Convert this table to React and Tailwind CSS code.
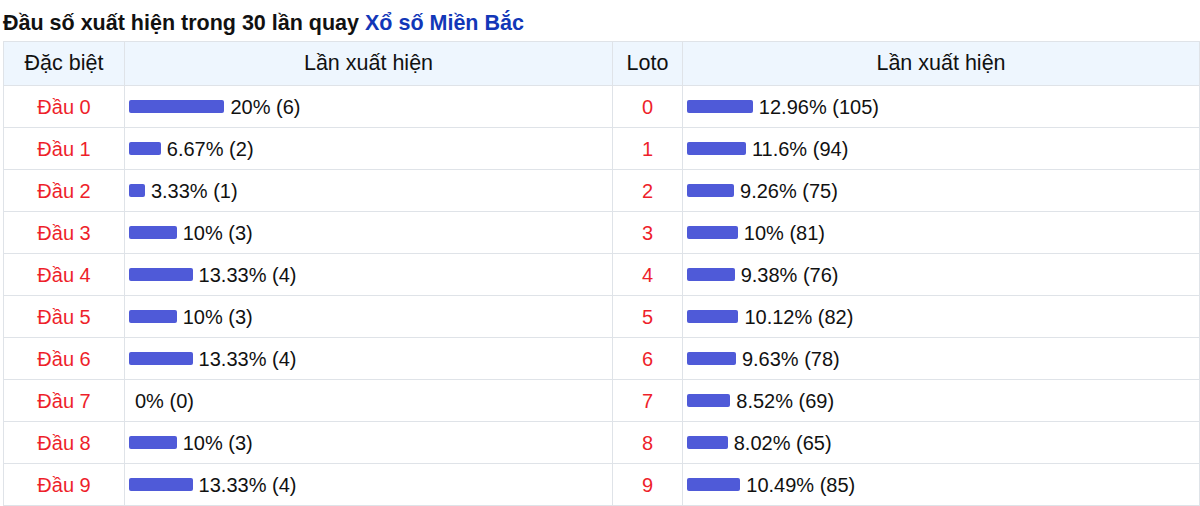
import React from 'react';

const dacBiet = [
  { label: 'Đầu 0', pct: 20, count: 6, text: '20%' },
  { label: 'Đầu 1', pct: 6.67, count: 2, text: '6.67%' },
  { label: 'Đầu 2', pct: 3.33, count: 1, text: '3.33%' },
  { label: 'Đầu 3', pct: 10, count: 3, text: '10%' },
  { label: 'Đầu 4', pct: 13.33, count: 4, text: '13.33%' },
  { label: 'Đầu 5', pct: 10, count: 3, text: '10%' },
  { label: 'Đầu 6', pct: 13.33, count: 4, text: '13.33%' },
  { label: 'Đầu 7', pct: 0, count: 0, text: '0%' },
  { label: 'Đầu 8', pct: 10, count: 3, text: '10%' },
  { label: 'Đầu 9', pct: 13.33, count: 4, text: '13.33%' },
];

const loto = [
  { pct: 12.96, count: 105, text: '12.96%' },
  { pct: 11.6, count: 94, text: '11.6%' },
  { pct: 9.26, count: 75, text: '9.26%' },
  { pct: 10, count: 81, text: '10%' },
  { pct: 9.38, count: 76, text: '9.38%' },
  { pct: 10.12, count: 82, text: '10.12%' },
  { pct: 9.63, count: 78, text: '9.63%' },
  { pct: 8.52, count: 69, text: '8.52%' },
  { pct: 8.02, count: 65, text: '8.02%' },
  { pct: 10.49, count: 85, text: '10.49%' },
];

// thanh ngang theo phần trăm của bề rộng ô
const Bar = ({ pct, max, text, count }) => (
  <div className="flex items-center pl-[4px]">
    <span
      className="inline-block h-[13px] rounded-[2px] bg-[#4f5ad8] mr-[6px]"
      style={{ width: `${(pct / 100) * max}px` }}
    ></span>
    <span>{text} ({count})</span>
  </div>
);

export default function App() {
  return (
    <div className="bg-white min-h-[506px] pl-[3px] text-[#111] font-['Liberation_Sans',Arial,sans-serif]">
      <h2 className="pt-[12px] pb-[7px] text-[21.5px] leading-[22px] font-bold">
        Đầu số xuất hiện trong 30 lần quay <span className="text-[#1237b8]">Xổ số Miền Bắc</span>
      </h2>
      <table className="w-[1196px] border-collapse table-fixed text-[20px]">
        <colgroup>
          <col className="w-[121px]" />
          <col className="w-[488px]" />
          <col className="w-[70px]" />
          <col className="w-[517px]" />
        </colgroup>
        <thead>
          <tr className="bg-[#eef6fe] h-[44px] text-[21.5px]">
            <th className="border border-[#dfe3e8] font-normal text-center">Đặc biệt</th>
            <th className="border border-[#dfe3e8] font-normal text-center">Lần xuất hiện</th>
            <th className="border border-[#dfe3e8] font-normal text-center">Loto</th>
            <th className="border border-[#dfe3e8] font-normal text-center">Lần xuất hiện</th>
          </tr>
        </thead>
        <tbody>
          {dacBiet.map((d, i) => (
            <tr key={i} className="h-[42px]">
              <td className="border border-[#dfe3e8] text-center text-[#ee1f2b]">{d.label}</td>
              <td className="border border-[#dfe3e8]">
                <Bar pct={d.pct} max={477} text={d.text} count={d.count} />
              </td>
              <td className="border border-[#dfe3e8] text-center text-[#ee1f2b]">{i}</td>
              <td className="border border-[#dfe3e8]">
                <Bar pct={loto[i].pct} max={508} text={loto[i].text} count={loto[i].count} />
              </td>
            </tr>
          ))}
        </tbody>
      </table>
    </div>
  );
}
